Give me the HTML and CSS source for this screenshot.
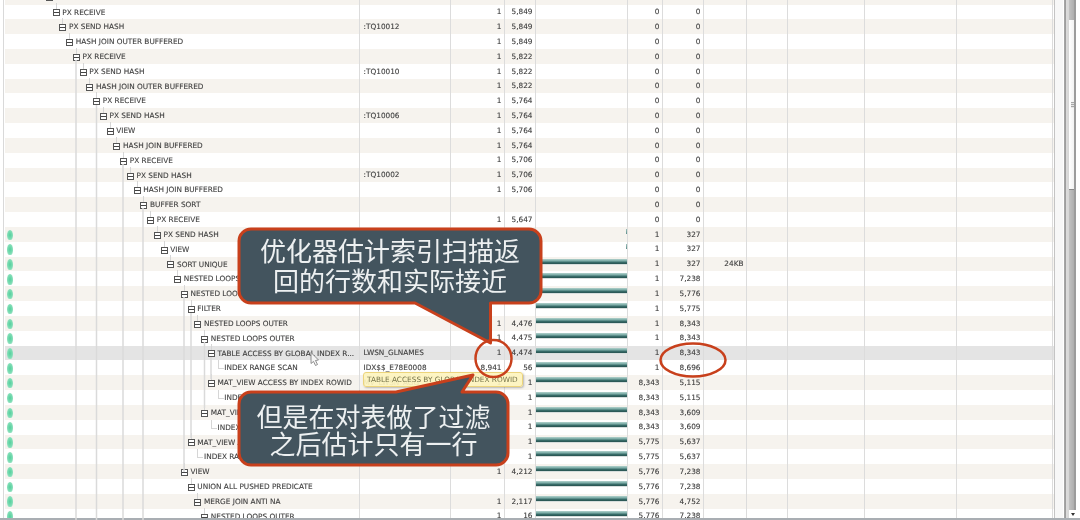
FILE: index.html
```html
<!DOCTYPE html>
<html lang="zh-CN">
<head>
<meta charset="utf-8">
<title>SQL Monitor</title>
<link rel="stylesheet" href="styles.css">
</head>
<body>
<div class="screen">
  <div class="main">
    <div class="plan">
      <div class="row"><span class="p"></span><span class="name" style="--l:-1"><i class="node"></i></span><span class="obj"></span><span class="num"></span><span class="num"></span><span class="barc"></span><span class="num"></span><span class="num"></span><span class="num"></span><span></span><span></span><span></span><span></span></div>
      <div class="row"><span class="p"></span><span class="name" style="--l:0"><i class="node"></i>PX RECEIVE</span><span class="obj"></span><span class="num">1</span><span class="num">5,849</span><span class="barc"></span><span class="num">0</span><span class="num">0</span><span class="num"></span><span></span><span></span><span></span><span></span></div>
      <div class="row"><span class="p"></span><span class="name" style="--l:1"><i class="node"></i>PX SEND HASH</span><span class="obj">:TQ10012</span><span class="num">1</span><span class="num">5,849</span><span class="barc"></span><span class="num">0</span><span class="num">0</span><span class="num"></span><span></span><span></span><span></span><span></span></div>
      <div class="row"><span class="p"></span><span class="name" style="--l:2"><i class="node"></i>HASH JOIN OUTER BUFFERED</span><span class="obj"></span><span class="num">1</span><span class="num">5,849</span><span class="barc"></span><span class="num">0</span><span class="num">0</span><span class="num"></span><span></span><span></span><span></span><span></span></div>
      <div class="row"><span class="p"></span><span class="name" style="--l:3"><i class="node"></i>PX RECEIVE</span><span class="obj"></span><span class="num">1</span><span class="num">5,822</span><span class="barc"></span><span class="num">0</span><span class="num">0</span><span class="num"></span><span></span><span></span><span></span><span></span></div>
      <div class="row"><span class="p"></span><span class="name" style="--l:4"><i class="node"></i>PX SEND HASH</span><span class="obj">:TQ10010</span><span class="num">1</span><span class="num">5,822</span><span class="barc"></span><span class="num">0</span><span class="num">0</span><span class="num"></span><span></span><span></span><span></span><span></span></div>
      <div class="row"><span class="p"></span><span class="name" style="--l:5"><i class="node"></i>HASH JOIN OUTER BUFFERED</span><span class="obj"></span><span class="num">1</span><span class="num">5,822</span><span class="barc"></span><span class="num">0</span><span class="num">0</span><span class="num"></span><span></span><span></span><span></span><span></span></div>
      <div class="row"><span class="p"></span><span class="name" style="--l:6"><i class="node"></i>PX RECEIVE</span><span class="obj"></span><span class="num">1</span><span class="num">5,764</span><span class="barc"></span><span class="num">0</span><span class="num">0</span><span class="num"></span><span></span><span></span><span></span><span></span></div>
      <div class="row"><span class="p"></span><span class="name" style="--l:7"><i class="node"></i>PX SEND HASH</span><span class="obj">:TQ10006</span><span class="num">1</span><span class="num">5,764</span><span class="barc"></span><span class="num">0</span><span class="num">0</span><span class="num"></span><span></span><span></span><span></span><span></span></div>
      <div class="row"><span class="p"></span><span class="name" style="--l:8"><i class="node"></i>VIEW</span><span class="obj"></span><span class="num">1</span><span class="num">5,764</span><span class="barc"></span><span class="num">0</span><span class="num">0</span><span class="num"></span><span></span><span></span><span></span><span></span></div>
      <div class="row"><span class="p"></span><span class="name" style="--l:9"><i class="node"></i>HASH JOIN BUFFERED</span><span class="obj"></span><span class="num">1</span><span class="num">5,764</span><span class="barc"></span><span class="num">0</span><span class="num">0</span><span class="num"></span><span></span><span></span><span></span><span></span></div>
      <div class="row"><span class="p"></span><span class="name" style="--l:10"><i class="node"></i>PX RECEIVE</span><span class="obj"></span><span class="num">1</span><span class="num">5,706</span><span class="barc"></span><span class="num">0</span><span class="num">0</span><span class="num"></span><span></span><span></span><span></span><span></span></div>
      <div class="row"><span class="p"></span><span class="name" style="--l:11"><i class="node"></i>PX SEND HASH</span><span class="obj">:TQ10002</span><span class="num">1</span><span class="num">5,706</span><span class="barc"></span><span class="num">0</span><span class="num">0</span><span class="num"></span><span></span><span></span><span></span><span></span></div>
      <div class="row"><span class="p"></span><span class="name" style="--l:12"><i class="node"></i>HASH JOIN BUFFERED</span><span class="obj"></span><span class="num">1</span><span class="num">5,706</span><span class="barc"></span><span class="num">0</span><span class="num">0</span><span class="num"></span><span></span><span></span><span></span><span></span></div>
      <div class="row"><span class="p"></span><span class="name" style="--l:13"><i class="node"></i>BUFFER SORT</span><span class="obj"></span><span class="num"></span><span class="num"></span><span class="barc"></span><span class="num">0</span><span class="num">0</span><span class="num"></span><span></span><span></span><span></span><span></span></div>
      <div class="row"><span class="p"></span><span class="name" style="--l:14"><i class="node"></i>PX RECEIVE</span><span class="obj"></span><span class="num">1</span><span class="num">5,647</span><span class="barc"></span><span class="num">0</span><span class="num">0</span><span class="num"></span><span></span><span></span><span></span><span></span></div>
      <div class="row"><span class="p"><i class="pill"></i></span><span class="name" style="--l:15"><i class="node"></i>PX SEND HASH</span><span class="obj"></span><span class="num"></span><span class="num"></span><span class="barc"><i class="bar tiny"></i></span><span class="num">1</span><span class="num">327</span><span class="num"></span><span></span><span></span><span></span><span></span></div>
      <div class="row"><span class="p"><i class="pill"></i></span><span class="name" style="--l:16"><i class="node"></i>VIEW</span><span class="obj"></span><span class="num"></span><span class="num"></span><span class="barc"><i class="bar tiny"></i></span><span class="num">1</span><span class="num">327</span><span class="num"></span><span></span><span></span><span></span><span></span></div>
      <div class="row"><span class="p"><i class="pill"></i></span><span class="name" style="--l:17"><i class="node"></i>SORT UNIQUE</span><span class="obj"></span><span class="num"></span><span class="num"></span><span class="barc"><i class="bar"></i></span><span class="num">1</span><span class="num">327</span><span class="num">24KB</span><span></span><span></span><span></span><span></span></div>
      <div class="row"><span class="p"><i class="pill"></i></span><span class="name" style="--l:18"><i class="node"></i>NESTED LOOPS OUTER</span><span class="obj"></span><span class="num"></span><span class="num"></span><span class="barc"><i class="bar"></i></span><span class="num">1</span><span class="num">7,238</span><span class="num"></span><span></span><span></span><span></span><span></span></div>
      <div class="row"><span class="p"><i class="pill"></i></span><span class="name" style="--l:19"><i class="node"></i>NESTED LOOPS OUTER</span><span class="obj"></span><span class="num"></span><span class="num"></span><span class="barc"><i class="bar"></i></span><span class="num">1</span><span class="num">5,776</span><span class="num"></span><span></span><span></span><span></span><span></span></div>
      <div class="row"><span class="p"><i class="pill"></i></span><span class="name" style="--l:20"><i class="node"></i>FILTER</span><span class="obj"></span><span class="num"></span><span class="num"></span><span class="barc"><i class="bar"></i></span><span class="num">1</span><span class="num">5,775</span><span class="num"></span><span></span><span></span><span></span><span></span></div>
      <div class="row"><span class="p"><i class="pill"></i></span><span class="name" style="--l:21"><i class="node"></i>NESTED LOOPS OUTER</span><span class="obj"></span><span class="num">1</span><span class="num">4,476</span><span class="barc"><i class="bar"></i></span><span class="num">1</span><span class="num">8,343</span><span class="num"></span><span></span><span></span><span></span><span></span></div>
      <div class="row"><span class="p"><i class="pill"></i></span><span class="name" style="--l:22"><i class="node"></i>NESTED LOOPS OUTER</span><span class="obj"></span><span class="num">1</span><span class="num">4,475</span><span class="barc"><i class="bar"></i></span><span class="num">1</span><span class="num">8,343</span><span class="num"></span><span></span><span></span><span></span><span></span></div>
      <div class="row hot"><span class="p"><i class="pill"></i></span><span class="name" style="--l:23"><i class="node"></i>TABLE ACCESS BY GLOBAL INDEX R...</span><span class="obj">LWSN_GLNAMES</span><span class="num">1</span><span class="num">4,474</span><span class="barc"><i class="bar"></i></span><span class="num">1</span><span class="num">8,343</span><span class="num"></span><span></span><span></span><span></span><span></span></div>
      <div class="row"><span class="p"><i class="pill"></i></span><span class="name" style="--l:24"><i class="leaf"></i>INDEX RANGE SCAN</span><span class="obj">IDX$$_E78E0008</span><span class="num">8,941</span><span class="num">56</span><span class="barc"><i class="bar"></i></span><span class="num">1</span><span class="num">8,696</span><span class="num"></span><span></span><span></span><span></span><span></span></div>
      <div class="row"><span class="p"><i class="pill"></i></span><span class="name" style="--l:23"><i class="node"></i>MAT_VIEW ACCESS BY INDEX ROWID</span><span class="obj">MV_LWSN_AGG</span><span class="num">1</span><span class="num">1</span><span class="barc"><i class="bar short"></i></span><span class="num">8,343</span><span class="num">5,115</span><span class="num"></span><span></span><span></span><span></span><span></span></div>
      <div class="row"><span class="p"><i class="pill"></i></span><span class="name" style="--l:24"><i class="leaf"></i>INDEX RANGE SCAN</span><span class="obj"></span><span class="num"></span><span class="num">1</span><span class="barc"><i class="bar short"></i></span><span class="num">8,343</span><span class="num">5,115</span><span class="num"></span><span></span><span></span><span></span><span></span></div>
      <div class="row"><span class="p"><i class="pill"></i></span><span class="name" style="--l:22"><i class="node"></i>MAT_VIEW ACCESS BY INDEX ROWID</span><span class="obj"></span><span class="num"></span><span class="num">1</span><span class="barc"><i class="bar short"></i></span><span class="num">8,343</span><span class="num">3,609</span><span class="num"></span><span></span><span></span><span></span><span></span></div>
      <div class="row"><span class="p"><i class="pill"></i></span><span class="name" style="--l:23"><i class="leaf"></i>INDEX RANGE SCAN</span><span class="obj"></span><span class="num"></span><span class="num">1</span><span class="barc"><i class="bar short"></i></span><span class="num">8,343</span><span class="num">3,609</span><span class="num"></span><span></span><span></span><span></span><span></span></div>
      <div class="row"><span class="p"><i class="pill"></i></span><span class="name" style="--l:20"><i class="node"></i>MAT_VIEW ACCESS BY INDEX ROWID</span><span class="obj"></span><span class="num"></span><span class="num">1</span><span class="barc"><i class="bar short"></i></span><span class="num">5,775</span><span class="num">5,637</span><span class="num"></span><span></span><span></span><span></span><span></span></div>
      <div class="row"><span class="p"><i class="pill"></i></span><span class="name" style="--l:21"><i class="leaf"></i>INDEX RANGE SCAN</span><span class="obj"></span><span class="num"></span><span class="num">1</span><span class="barc"><i class="bar short"></i></span><span class="num">5,775</span><span class="num">5,637</span><span class="num"></span><span></span><span></span><span></span><span></span></div>
      <div class="row"><span class="p"><i class="pill"></i></span><span class="name" style="--l:19"><i class="node"></i>VIEW</span><span class="obj"></span><span class="num">1</span><span class="num">4,212</span><span class="barc"><i class="bar"></i></span><span class="num">5,776</span><span class="num">7,238</span><span class="num"></span><span></span><span></span><span></span><span></span></div>
      <div class="row"><span class="p"><i class="pill"></i></span><span class="name" style="--l:20"><i class="node"></i>UNION ALL PUSHED PREDICATE</span><span class="obj"></span><span class="num"></span><span class="num"></span><span class="barc"><i class="bar"></i></span><span class="num">5,776</span><span class="num">7,238</span><span class="num"></span><span></span><span></span><span></span><span></span></div>
      <div class="row"><span class="p"><i class="pill"></i></span><span class="name" style="--l:21"><i class="node"></i>MERGE JOIN ANTI NA</span><span class="obj"></span><span class="num">1</span><span class="num">2,117</span><span class="barc"><i class="bar"></i></span><span class="num">5,776</span><span class="num">4,752</span><span class="num"></span><span></span><span></span><span></span><span></span></div>
      <div class="row"><span class="p"><i class="pill"></i></span><span class="name" style="--l:22"><i class="node"></i>NESTED LOOPS OUTER</span><span class="obj"></span><span class="num">1</span><span class="num">16</span><span class="barc"><i class="bar"></i></span><span class="num">5,776</span><span class="num">7,238</span><span class="num"></span><span></span><span></span><span></span><span></span></div>
    </div>
    <div class="gutter"></div>
    <div class="scroll">
      <div class="track-top"></div>
      <div class="thumb"><i class="grip"></i></div>
      <div class="track-bottom"></div>
      <div class="arrow"></div>
    </div>
    <div class="edge"></div>
  </div>
  <div class="status"></div>

  <svg class="tree" width="1080" height="520" viewBox="0 0 1080 520" aria-hidden="true">
    <path d="M76 60V520M96.5 105V520M123 164V520M143 208V520M184 297V472M191 313V438M204.5 342V408M211 357V379"/>
  </svg>

  <div class="tip">TABLE ACCESS BY GLOBAL INDEX ROWID</div>

  <svg class="marks" width="1080" height="520" viewBox="0 0 1080 520" aria-hidden="true">
    <path class="cursor" d="M311 352.500V363.500L313.500 361.500L315.500 365.500L317.500 364.500L315.500 360.500L318.500 360Z"/>
    <path class="bubble" d="M251 229H529a12 12 0 0 1 12 12V291a12 12 0 0 1-12 12H490.500V343L415 303H251a12 12 0 0 1-12-12V241a12 12 0 0 1 12-12Z"/>
    <path class="bubble" d="M251 392H396L473 375L462 392H496a12 12 0 0 1 12 12V453a12 12 0 0 1-12 12H251a12 12 0 0 1-12-12V404a12 12 0 0 1 12-12Z"/>
    <ellipse class="ring" cx="493.500" cy="358.500" rx="18" ry="18.500"/>
    <ellipse class="ring" cx="693" cy="360" rx="32.500" ry="16.500"/>
  </svg>

  <div class="say say-one">优化器估计索引扫描返<br>回的行数和实际接近</div>
  <div class="say say-two">但是在对表做了过滤<br>之后估计只有一行</div>
</div>
</body>
</html>
```
FILE: styles.css
```css
* { box-sizing: border-box; }
html, body { margin: 0; padding: 0; }
body { width: 1080px; height: 520px; overflow: hidden; background: #fff; }

.screen { position: relative; width: 1080px; height: 520px; overflow: hidden; display: flex; flex-direction: column; }
.main { flex: 1; min-height: 0; display: flex; filter: blur(.5px); }
.status { height: 2px; background: #a9aeb3; }

.plan { width: 1055px; margin-top: -10.33px; padding-left: 5px; background: linear-gradient(90deg, #fff 3px, #d9d9d9 3px, #d9d9d9 4.5px, #fff 4.5px); border-right: 1px solid #c4c4c4; overflow: hidden; flex: none; font: 7.33px "DejaVu Sans", Verdana, sans-serif; color: #3c3c3c; -webkit-text-stroke: .1px #3c3c3c; }

.row { display: grid; grid-template-columns: 12px 343px 91px 54px 31px 92px 35px 41px 43px 41px 77px 92px 96px; height: 14.83px; line-height: 14.83px; background: #fff; }
.row:nth-child(odd) { background: #f6f3ee; }
.row.hot { background: #e4e4e4; }
.row > span { display: block; border-right: 1px solid #dcdcdc; white-space: nowrap; overflow: hidden; min-width: 0; }
.row > .p { border-right: 0; display: flex; align-items: center; padding-left: 2px; }
.row > .name { display: flex; align-items: center; padding-top: 1px; padding-left: calc(35.7px + var(--l) * 6.75px); overflow: visible; }
.row > .obj { padding-top: .7px; padding-left: 3.500px; }
.row > .num { text-align: right; padding-top: .7px; padding-right: 2.500px; }
.row > .barc { display: flex; padding-top: 2px; }

.pill { display: block; width: 5.500px; height: 10.500px; border-radius: 50% 50% 45% 45%; background: radial-gradient(ellipse at center, #52d09c 0, #7edcb4 55%, #c6eedd 100%); }
.node { position: relative; flex: none; width: 7px; height: 7px; margin-right: 2.600px; border: 1px solid #555; background: linear-gradient(#fff 2px, #444 2px, #444 3px, #fff 3px); }
.node::before { content: ""; position: absolute; left: 2px; bottom: 6px; width: 1px; height: 6px; background: #d6d6d6; }
.leaf { position: relative; flex: none; width: 7px; height: 7px; margin-right: 2.600px; }
.leaf::before { content: ""; position: absolute; left: 3px; top: -5px; width: 5px; height: 8px; border-left: 1px solid #d6d6d6; border-bottom: 1px solid #d6d6d6; }

.bar { display: block; width: 92px; height: 5px; background: linear-gradient(#b4d2cd 0, #7dada8 35%, #366966 70%, #27514f 100%); box-shadow: 0 1px 0 #d8dedd; }
.bar.short { width: 91px; }
.bar.tiny { width: 1.500px; margin-left: auto; height: 5px; background: linear-gradient(#9cc0bb, #5d8f8b); box-shadow: none; }

.gutter { width: 8px; background: #f7f7f7; flex: none; }
.scroll { width: 12px; flex: none; margin-left: 1px; display: flex; flex-direction: column; background: linear-gradient(90deg, #a9a9a9 0, #9a9a9a 2px, #dcdcdc 2px, #d6d6d6 5px); padding-left: 5px; }
.track-top, .track-bottom { background: linear-gradient(90deg, #c2c2c2, #a6a6a6); }
.track-top { height: 20px; }
.track-bottom { flex: 1; }
.thumb { height: 170px; background: linear-gradient(90deg, #fff, #ededed); border-bottom: 1px solid #8a8a8a; display: flex; align-items: center; justify-content: center; }
.grip { display: block; width: 4px; height: 6px; background: repeating-linear-gradient(#a8a8a8 0 1px, #e6e6e6 1px 2px); }
.arrow { height: 8px; background: #fff; position: relative; }
.arrow::after { content: ""; position: absolute; left: 2px; top: 3px; border: 2.500px solid transparent; border-top: 3px solid #333; border-bottom: 0; }
.edge { width: 2px; flex: none; margin-left: -2px; background: #9c9c9c; }

.tree { position: absolute; left: 0; top: 0; filter: blur(.4px); }
.tree path { fill: none; stroke: #dadada; stroke-width: 1.500; }

.tip { position: absolute; left: 363px; top: 372px; width: 160px; height: 15px; padding-left: 3px; border: 1px solid #ecd47c; border-radius: 3px; background: rgba(253, 244, 190, .92); box-shadow: 1px 1px 2px rgba(0, 0, 0, .25); font: 7.33px/13px "DejaVu Sans", Verdana, sans-serif; color: #77744a; white-space: nowrap; filter: blur(.35px); }

.marks { position: absolute; left: 0; top: 0; filter: blur(.35px); }
.bubble { fill: #43545e; stroke: #c8401c; stroke-width: 3; stroke-linejoin: round; }
.ring { fill: none; stroke: #c8401c; stroke-width: 2.500; }
.cursor { fill: #f4f4f4; stroke: #777; stroke-width: .8; }

.say { position: absolute; left: 239px; display: flex; align-items: center; justify-content: center; text-align: center; color: #edf0f1; font-family: "Noto Sans CJK SC", "Noto Sans", sans-serif; font-size: 26px; filter: blur(.35px); }
.say-one { top: 228px; width: 302px; height: 74px; line-height: 30px; }
.say-two { top: 392px; width: 269px; height: 73px; line-height: 27px; }
```
